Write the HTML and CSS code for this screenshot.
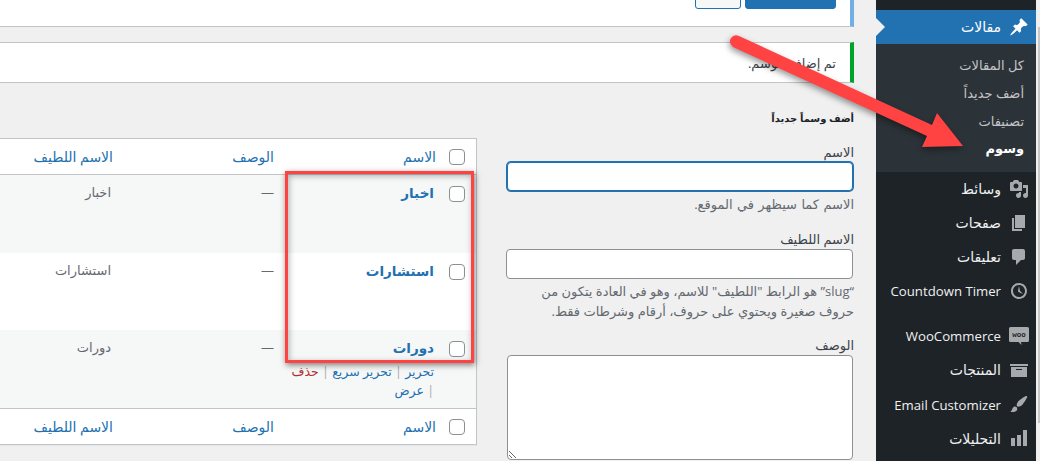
FILE: index.html
```html
<!DOCTYPE html>
<html lang="ar" dir="rtl">
<head>
<meta charset="utf-8">
<title>وسوم</title>
<link rel="stylesheet" href="styles.css">
</head>
<body>
<div class="app">
  <div class="scroll-track"><div class="scroll-thumb"></div></div>
  <nav class="sidebar">
    <a class="item current"><svg class="icon" viewBox="0 0 20 20"><path d="M10.44 3.02l1.82-1.82 6.36 6.35-1.83 1.82c-1.05-.68-2.48-.57-3.41.36l-.75.75c-.92.93-1.04 2.35-.35 3.41l-1.83 1.82-2.41-2.41-2.8 2.79c-.42.42-3.38 2.71-3.8 2.29s1.86-3.39 2.28-3.81l2.79-2.79L4.1 9.36l1.83-1.82c1.05.69 2.48.57 3.4-.36l.75-.75c.93-.92 1.05-2.35.36-3.41z"/></svg><span>مقالات</span></a>
    <div class="submenu">
      <a>كل المقالات</a>
      <a>أضف جديداً</a>
      <a>تصنيفات</a>
      <a class="on">وسوم</a>
    </div>
    <a class="item"><svg class="icon" viewBox="0 0 20 20"><path d="M13 11V4c0-.55-.45-1-1-1h-1.67L9 1H5L3.67 3H2c-.55 0-1 .45-1 1v7c0 .55.45 1 1 1h10c.55 0 1-.45 1-1zM7 4.5c1.38 0 2.5 1.12 2.5 2.5S8.38 9.5 7 9.5 4.5 8.38 4.5 7 5.62 4.5 7 4.5zM14 6h5v10.5c0 1.38-1.12 2.5-2.5 2.5S14 17.88 14 16.5s1.12-2.5 2.5-2.5c.17 0 .34.02.5.05V9h-3V6zm-4 8.05V13h2v3.5c0 1.38-1.12 2.5-2.5 2.5S7 17.88 7 16.5 8.12 14 9.5 14c.17 0 .34.02.5.05z"/></svg><span>وسائط</span></a>
    <a class="item"><svg class="icon" viewBox="0 0 20 20"><path d="M6 15V2h10v13H6zm-1 1h8v2H3V5h2v11z"/></svg><span>صفحات</span></a>
    <a class="item"><svg class="icon" viewBox="0 0 20 20"><path d="M5 2h9c1.1 0 2 .9 2 2v7c0 1.1-.9 2-2 2h-2l-5 5v-5H5c-1.1 0-2-.9-2-2V4c0-1.1.9-2 2-2z"/></svg><span>تعليقات</span></a>
    <a class="item"><svg class="icon" viewBox="0 0 20 20"><path d="M10 2c4.42 0 8 3.58 8 8s-3.58 8-8 8-8-3.58-8-8 3.58-8 8-8zm0 14c3.31 0 6-2.69 6-6s-2.69-6-6-6-6 2.69-6 6 2.69 6 6 6zm-.71-5.29c.07.05.14.1.23.15l-.02.02L14 13l-3.03-3.19L10 5l-.97 4.81h.01c0 .02-.01.05-.02.09S9 9.97 9 10c0 .28.1.52.29.71z"/></svg><span class="lat">Countdown Timer</span></a>
    <div class="sep"></div>
    <a class="item"><svg class="icon" viewBox="0 0 20 20"><path d="M1.500 1h17A1.500 1.500 0 0 1 20 2.500v12a1.500 1.500 0 0 1-1.500 1.500H12l.5 3-3-3H1.500A1.500 1.500 0 0 1 0 14.500v-12A1.500 1.500 0 0 1 1.500 1z"/><text class="woo" x="10" y="11" text-anchor="middle" direction="ltr">woo</text></svg><span class="lat">WooCommerce</span></a>
    <a class="item"><svg class="icon" viewBox="0 0 20 20"><path d="M19 4v2H1V4h18zM2 7h16v10H2V7zm11 3V9H7v1h6z"/></svg><span>المنتجات</span></a>
    <a class="item low"><svg class="icon" viewBox="0 0 20 20"><path d="M18.33 3.57s.27-.8-.31-1.360c-.53-.52-1.220-.24-1.220-.24-.61.3-5.760 3.470-7.670 5.570-.86.96-2.060 3.790-1.090 4.820.92.98 3.960-.17 4.790-1 2.060-2.060 5.210-7.170 5.500-8.790zM1.400 17.650c2.370-1.560 1.460-3.410 3.230-4.640.93-.65 2.220-.62 3.080.29.63.67.8 2.570-.16 3.460-1.570 1.450-4 1.550-6.150.89z"/></svg><span class="lat">Email Customizer</span></a>
    <a class="item low"><svg class="icon" viewBox="0 0 20 20"><path d="M18 18V2h-4v16h4zm-6 0V7H8v11h4zm-6 0v-8H2v8h4z"/></svg><span>التحليلات</span></a>
  </nav>

  <main class="main">
    <div class="topbox">
      <button class="btn primary">تحديث</button>
      <button class="btn secondary">حذف</button>
    </div>
    <div class="notice">تم إضافة الوسم.</div>
    <div class="columns">
      <section class="form-col">
        <h2 class="add-title">أضف وسماً جديداً</h2>
        <label class="lab">الاسم</label>
        <input class="field focus" type="text">
        <p class="hint hint1">الاسم كما سيظهر في الموقع.</p>
        <label class="lab lab2">الاسم اللطيف</label>
        <input class="field slug" type="text">
        <p class="hint">“slug” هو الرابط "اللطيف" للاسم، وهو في العادة يتكون من حروف صغيرة ويحتوي على حروف، أرقام وشرطات فقط.</p>
        <label class="lab lab3">الوصف</label>
        <textarea class="area"></textarea>
      </section>
      <section class="table-col">
        <table class="terms">
          <colgroup><col class="c-check"><col class="c-name"><col class="c-desc"><col class="c-slug"></colgroup>
          <thead>
            <tr><th class="chk"><span class="box"></span></th><th>الاسم</th><th>الوصف</th><th>الاسم اللطيف</th></tr>
          </thead>
          <tbody>
            <tr class="alt r1"><td class="chk"><span class="box"></span></td><td class="name">اخبار</td><td class="dash">—</td><td class="sl">اخبار</td></tr>
            <tr class="r2"><td class="chk"><span class="box"></span></td><td class="name">استشارات</td><td class="dash">—</td><td class="sl">استشارات</td></tr>
            <tr class="alt r3"><td class="chk"><span class="box"></span></td><td class="name">دورات
              <div class="actions"><a>تحرير</a> <i>|</i> <a>تحرير سريع</a> <i>|</i> <a class="del">حذف</a> <span class="keep"><i>|</i> <a>عرض</a></span></div></td><td class="dash">—</td><td class="sl">دورات</td></tr>
          </tbody>
          <tfoot>
            <tr><th class="chk"><span class="box"></span></th><th>الاسم</th><th>الوصف</th><th>الاسم اللطيف</th></tr>
          </tfoot>
        </table>
      </section>
    </div>
  </main>

  <div class="redbox"></div>
  <svg class="arrow" viewBox="0 0 1040 461" aria-hidden="true">
    <path class="arrow-shape" d="M731 38 Q734 34 739 36 L932 125 L937 113 L963 146 L922 147 L927 136 L733 47 Q728 43 731 38 Z"/>
  </svg>
</div>
</body>
</html>
```
FILE: styles.css
```css
* { box-sizing: border-box; }
html, body { margin: 0; padding: 0; height: 461px; overflow: hidden; }
body {
  background: #f0f0f1;
  color: #3c434a;
  font-family: "Open Sans", "DejaVu Sans", sans-serif;
  font-size: 13px;
  line-height: 1.4;
}
.app { position: relative; display: flex; width: 1040px; height: 461px; overflow: hidden; }
.scroll-track { width: 4px; flex: none; padding-top: 27px; }
.scroll-thumb { width: 2px; height: 396px; background: #c8c8c8; }
.sidebar { width: 160px; flex: none; background: #1d2327; padding-top: 10px; height: 461px; }
.item {
  display: flex; align-items: center; gap: 8px;
  height: 34px; padding-right: 7px; color: #f0f0f1; font-size: 14px; white-space: nowrap;
}
.low span { padding-top: 2px; }
.lat { font-size: 13.200px; }
.icon { width: 20px; height: 20px; fill: #a7aaad; flex: none; }
.woo { font: bold 7.500px "Liberation Mono", monospace; fill: #1d2327; }
.current { position: relative; background: #2271b1; color: #fff; }
.current .icon { fill: #fff; }
.current::after {
  content: ""; position: absolute; left: 0; top: 8px;
  border: 9px solid transparent; border-left-color: #f0f0f1; border-right-width: 0;
}
.submenu { display: flex; flex-direction: column; background: #2c3338; padding: 8px 12px 9px 0; height: 128px; }
.submenu a { height: 28px; line-height: 26px; color: #c3c4c7; font-size: 13px; }
.submenu a.on { color: #fff; font-weight: 700; }
.sep { height: 11px; }
.main { flex: 1; min-width: 0; height: 461px; overflow: hidden; }
.topbox {
  height: 27px; background: #fff; border-bottom: 1px solid #c3c4c7; border-right: 4px solid #72aee6;
  margin-right: 22px; display: flex; align-items: flex-end; gap: 4px; padding: 0 14px 17px 0; overflow: hidden;
}
.btn { flex: none; height: 32px; border-radius: 3px; font: 13px "Open Sans", "DejaVu Sans", sans-serif; padding: 0; }
.primary { width: 91px; background: #2271b1; border: 1px solid #2271b1; color: #fff; }
.secondary { width: 46px; background: #f6f7f7; border: 1px solid #2271b1; color: #2271b1; }
.notice {
  height: 41px; margin: 15px 22px 0 0; background: #fff;
  border: 1px solid #c3c4c7; border-width: 1px 0; border-right: 4px solid #00a32a;
  padding: 10px 14px 0 0; line-height: 20px;
}
.columns { display: flex; gap: 29px; margin-right: 22px; }
.form-col { width: 348px; flex: none; padding-top: 26px; }
.add-title { margin: 0 0 16px; font-size: 10px; font-weight: 700; color: #1d2327; line-height: 18px; }
.lab { display: block; line-height: 18px; height: 18px; margin-bottom: 1px; }
.lab2 { margin-top: 16px; }
.lab3 { margin-top: 15px; margin-bottom: 1px; }
.field { display: block; width: 347px; border: 1px solid #8c8f94; border-radius: 4px; background: #fff; height: 30px; margin: 0 1px 0 0; padding: 0; outline: 0; }
.focus { height: 29px; width: 346px; margin-right: 1px; border-color: #2271b1; box-shadow: 0 0 0 1px #2271b1; }
.hint { margin: 2px 0 0; font-size: 13px; line-height: 20px; color: #646970; }
.hint1 { margin-top: 3px; word-spacing: 1px; }
.area { display: block; width: 346px; height: 105px; margin: 0 1px 0 0; border: 1px solid #8c8f94; border-radius: 4px; background: #fff; padding: 0; }
.table-col { width: 478px; flex: none; padding-top: 55px; }
.terms {
  table-layout: fixed; width: 478px; border-collapse: separate; border-spacing: 0;
  background: #fff; border: 1px solid #c3c4c7; box-shadow: 0 1px 1px rgba(0,0,0,.04); font-size: 13px;
}
.c-check { width: 30px; } .c-name { width: 162px; } .c-desc { width: 163px; } .c-slug { width: 122px; }
.terms th { height: 36px; padding: 0 10px; font-size: 14px; font-weight: 400; text-align: right; color: #2271b1; }
.terms th:nth-child(4) { padding-right: 8px; }
.terms thead th { border-bottom: 1px solid #c3c4c7; }
.terms tfoot th { border-top: 1px solid #c3c4c7; }
.terms td { padding: 8px 10px; vertical-align: top; color: #646970; }
.terms .chk { padding: 0 11px 0 3px; }
.terms th.chk { vertical-align: middle; }
.terms td.chk { padding-top: 11px; }
.box { display: block; width: 16px; height: 16px; background: #fff; border: 1px solid #8c8f94; border-radius: 4px; }
.alt td { background: #f6f7f7; }
.r1 td { height: 78px; } .r2 td { height: 77px; } .r3 td { height: 78px; }
.terms .name { color: #2271b1; font-weight: 700; font-size: 13.500px; line-height: 20px; padding: 8px 12px 8px 0; }
.actions { font-weight: 400; font-size: 12.500px; line-height: 19px; margin-top: 4px; color: #a7aaad; }
.actions a { color: #2271b1; }
.actions i { font-style: normal; }
.actions .del { color: #b32d2e; }
.keep { display: inline-block; white-space: nowrap; }
.redbox {
  position: absolute; left: 285px; top: 171px; width: 189px; height: 192px;
  border: 3px solid #ff4242; box-shadow: 1px 2px 6px rgba(0,0,0,.5), inset 1px 2px 6px rgba(0,0,0,.3);
}
.arrow { position: absolute; left: 0; top: 0; width: 1040px; height: 461px; pointer-events: none; }
.arrow-shape { fill: #ff4242; filter: drop-shadow(-1px 3px 3px rgba(0,0,0,.4)); }
```
